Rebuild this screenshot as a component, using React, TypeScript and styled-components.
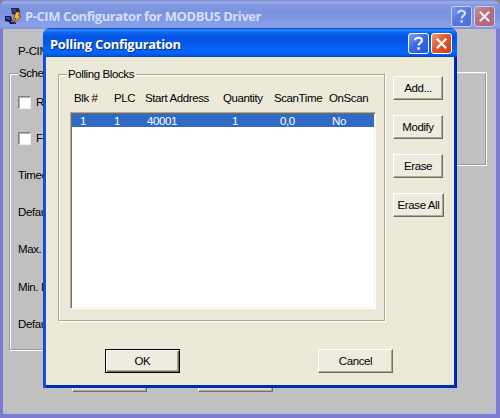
import React from "react";
import styled, { createGlobalStyle, css } from "styled-components";

const GlobalStyle = createGlobalStyle`
  * { box-sizing: border-box; }
  body { margin: 0; background: #85858f; overflow: hidden; }
`;

const Desktop = styled.div`
  position: relative;
  width: 500px;
  height: 418px;
  overflow: hidden;
  font: 11.5px/14px "Liberation Sans", Arial, sans-serif;
  color: #000;
`;

const Text = styled.span<{ $track?: number }>`
  white-space: nowrap;
  letter-spacing: ${(p) => p.$track ?? -0.4}px;
`;

const MainWindow = styled.section`
  display: flex;
  flex-direction: column;
  width: 500px;
  height: 418px;
  border-radius: 7px 7px 0 0;
  overflow: hidden;
  background: #7c7cd0;
`;

const MainTitleBar = styled.header`
  display: flex;
  align-items: center;
  flex: none;
  height: 29px;
  padding: 3px 5px 0 5px;
  background: linear-gradient(#7786c8 0, #9cafeb 2px, #8398e0 5px, #7b92df 12px, #8299e4 20px, #8ba2ec 26px, #8192dc 29px);
`;

const Title = styled.h1<{ $muted?: boolean }>`
  flex: 1;
  margin: 0;
  padding-left: ${(p) => (p.$muted ? 3 : 0)}px;
  font: bold 13px/20px "Open Sans", "Noto Sans", sans-serif;
  white-space: nowrap;
  color: ${(p) => (p.$muted ? "#d5dff9" : "#fff")};
  letter-spacing: ${(p) => (p.$muted ? -0.42 : -0.3)}px;
  text-shadow: ${(p) => (p.$muted ? "none" : "1px 1px 1px #0c2c8c")};
`;

const CaptionButtons = styled.div`
  display: flex;
  gap: 2px;
`;

const CaptionButton = styled.button<{ $close?: boolean; $muted?: boolean }>`
  display: grid;
  place-items: center;
  width: 21px;
  height: 21px;
  padding: 0;
  border: 1px solid ${(p) => (p.$muted ? "#c3d0f6" : "#fff")};
  border-radius: 3px;
  background: ${(p) =>
    p.$close
      ? p.$muted
        ? "linear-gradient(135deg, #c18c9e, #b56d7c 50%, #a9697d)"
        : "linear-gradient(135deg, #f09a7c, #e4572e 45%, #cf3d12)"
      : p.$muted
        ? "linear-gradient(135deg, #7c98ec, #5577e0 50%, #4c6bd9)"
        : "linear-gradient(135deg, #7ba1f7, #3b6bea 45%, #2152dc)"};
`;

const MainBody = styled.div`
  flex: 1;
  display: grid;
  grid-template-columns: 1fr 1fr;
  grid-template-rows: 43px 278px 1fr;
  margin: 0 4px 4px 3px;
  padding-left: 6px;
  background: #c0c0c0;
  box-shadow: inset -2px 0 #b9bdd4, inset 0 -2px #babbd0;
`;

const MainHeading = styled.div`
  grid-column: 1 / 3;
  padding: 15px 0 0 9px;
`;

const groupFrame = css`
  margin: 0;
  min-width: 0;
  border: 1px solid #808080;
  box-shadow: 1px 1px #fff, inset 1px 1px #fff;
`;

const ScheduleGroup = styled.fieldset`
  ${groupFrame}
  padding: 0 0 0 8px;
  margin-top: -6px;
  height: 284px;
  border-color: #9c9c9c;
`;

const Legend = styled.legend<{ $bg: string }>`
  padding: 0 2px 0 1px;
  background: ${(p) => p.$bg};
  line-height: 14px;
`;

const SideGroup = styled.div`
  width: 244px;
  height: 94px;
  margin-left: -10px;
  border: 1px solid #fff;
  box-shadow: inset -1px -1px #999, inset 0 1px #ccc;
`;

const OptionRow = styled.label`
  display: flex;
  align-items: center;
  gap: 5px;
  height: 36px;
`;

const Options = styled.div`
  padding-top: 4px;
`;

const CheckBox = styled.span`
  width: 13px;
  height: 13px;
  background: #fff;
  border: 1px solid;
  border-color: #808080 #eee #eee #808080;
  box-shadow: inset 1px 1px #b0b0b0;
`;

const FieldRow = styled.div`
  display: flex;
  align-items: center;
  height: 37.4px;
`;

const MainActions = styled.footer`
  grid-column: 1 / 3;
  display: flex;
  gap: 51px;
  padding: 18px 0 0 63px;
`;

const bevel = css`
  border: 1px solid;
  border-color: #fff #716f64 #716f64 #fff;
  box-shadow: inset -1px -1px #aca899;
`;

const PushButton = styled.button<{ $w: number; $default?: boolean; $gray?: boolean }>`
  ${bevel}
  display: flex;
  align-items: center;
  justify-content: center;
  flex: none;
  width: ${(p) => p.$w}px;
  height: 24px;
  padding: 0 0 1px;
  font: inherit;
  color: #000;
  background: ${(p) => (p.$gray ? "#dcdcdc" : "#eeecdf")};
  ${(p) =>
    p.$default &&
    css`
      border-color: #000;
      box-shadow: inset 1px 1px #fff, inset -1px -1px #716f64, inset -2px -2px #aca899;
    `}
`;

const Dialog = styled.section`
  position: absolute;
  left: 43px;
  top: 28px;
  display: flex;
  flex-direction: column;
  width: 414px;
  height: 360px;
  border-radius: 7px 7px 0 0;
  overflow: hidden;
  background: linear-gradient(90deg, #1642c8 0, #0a5cf0 3px, #0034c8 411px, #001a98 414px);
`;

const DialogTitleBar = styled.header`
  display: flex;
  align-items: center;
  flex: none;
  height: 29px;
  padding: 2px 5px 0 7px;
  background: linear-gradient(#0a3fc0 0, #2e8cff 2px, #0f6cf0 4px, #0455e2 8px, #0557e6 14px, #0464fb 21px, #0465fc 25px, #0348d6 29px);
`;

const DialogBody = styled.div`
  flex: 1;
  display: grid;
  grid-template: 274px 1fr / 338px 1fr;
  margin: 0 3px;
  background: #ece9d8;
  border-bottom: 3px solid #0029b4;
`;

const PollingGroup = styled.fieldset`
  ${groupFrame}
  width: 327px;
  height: 254px;
  margin: 10px 0 0 12px;
  padding: 0 7px 0 8px;
  border-color: #aca899;
`;

const HeaderRow = styled.div`
  display: grid;
  grid-template-columns: 40px 31px 78px 51px 55px 1fr;
  padding: 10px 0 0 7px;
  height: 31px;
`;

const ListBox = styled.div`
  width: 306px;
  height: 197px;
  margin-left: 3px;
  background: #fff;
  border: 1px solid;
  border-color: #aca899 #fff #fff #aca899;
  box-shadow: inset 1px 1px #716f64, inset -1px -1px #f3f1e6;
  padding: 1px;
`;

const ListRow = styled.div`
  display: grid;
  grid-template-columns: 34px 33px 85px 48px 52px 1fr;
  height: 13px;
  line-height: 14px;
  padding: 0 0 0 8px;
  color: #fff;
  background: #316ac5;
`;

const ActionColumn = styled.div`
  display: flex;
  flex-direction: column;
  gap: 15px;
  padding: 19px 0 0 9px;
`;

const DialogActions = styled.footer`
  grid-column: 1 / 3;
  display: flex;
  gap: 138px;
  padding: 18px 0 0 59px;
`;

const HelpGlyph = ({ muted }: { muted?: boolean }) => (
  <svg width="19" height="19" viewBox="0 0 19 19" fill="none" stroke={muted ? "#d7e1fb" : "#fff"} strokeWidth="2.1">
    <path d="M6 6.2C6.2 3 13 2.7 13 6.3C13 8.8 9.7 8.5 9.6 11.5" />
    <path d="M8.4 14.5H10.8" strokeWidth="2.4" />
  </svg>
);

const CloseGlyph = ({ muted }: { muted?: boolean }) => (
  <svg width="19" height="19" viewBox="0 0 19 19" fill="none" stroke={muted ? "#f0e6ee" : "#fff"} strokeWidth="2.3">
    <path d="M4.8 4.8L14.2 14.2M14.2 4.8L4.8 14.2" />
  </svg>
);

const AppIcon = () => (
  <svg width="17" height="17" viewBox="0 0 17 17">
    <path d="M6 0H14L15 4L12 7L7 6Z" fill="#24243a" />
    <path d="M7 1H11V4H8Z" fill="#2340b8" />
    <path d="M0 8H6L7 12L11 14V16H5L4 14L0 13Z" fill="#15193c" />
    <path d="M1 9H5V12L1 11Z" fill="#1d46dc" />
    <path d="M6 13H9V14H6Z" fill="#8d93a8" />
    <path d="M11 4H15L13.5 8H16L9 16L11 10.5H8.5Z" fill="#fbb924" stroke="#7c3518" strokeWidth=".8" />
  </svg>
);

const WindowControls = ({ muted }: { muted?: boolean }) => (
  <CaptionButtons>
    <CaptionButton $muted={muted} aria-label="Help"><HelpGlyph muted={muted} /></CaptionButton>
    <CaptionButton $muted={muted} $close aria-label="Close"><CloseGlyph muted={muted} /></CaptionButton>
  </CaptionButtons>
);

const columns = ["Blk #", "PLC", "Start Address", "Quantity", "ScanTime", "OnScan"];
const block = ["1", "1", "40001", "1", "0,0", "No"];
const fields = ["Timeout", "Default", "Max. ", "Min. D", "Default"];
const actions = [
  { label: "Add...", width: 50 },
  { label: "Modify", width: 50 },
  { label: "Erase", width: 50 },
  { label: "Erase All", width: 51 },
];

export default function App() {
  return (
    <>
      <GlobalStyle />
      <Desktop>
        <MainWindow>
          <MainTitleBar>
            <AppIcon />
            <Title $muted>P-CIM Configurator for MODBUS Driver</Title>
            <WindowControls muted />
          </MainTitleBar>
          <MainBody>
            <MainHeading><Text>P-CIM</Text></MainHeading>
            <ScheduleGroup>
              <Legend $bg="#c0c0c0"><Text>Sche</Text></Legend>
              <Options>
                <OptionRow><CheckBox /><Text>R</Text></OptionRow>
                <OptionRow><CheckBox /><Text>F</Text></OptionRow>
              </Options>
              {fields.map((f, i) => (
                <FieldRow key={i}><Text>{f}</Text></FieldRow>
              ))}
            </ScheduleGroup>
            <SideGroup />
            <MainActions>
              <PushButton $w={75} $gray />
              <PushButton $w={75} $gray />
            </MainActions>
          </MainBody>
        </MainWindow>

        <Dialog>
          <DialogTitleBar>
            <Title>Polling Configuration</Title>
            <WindowControls />
          </DialogTitleBar>
          <DialogBody>
            <PollingGroup>
              <Legend $bg="#ece9d8"><Text>Polling Blocks</Text></Legend>
              <HeaderRow>
                {columns.map((c) => <Text key={c}>{c}</Text>)}
              </HeaderRow>
              <ListBox>
                <ListRow>
                  {block.map((v, i) => <Text key={i}>{v}</Text>)}
                </ListRow>
              </ListBox>
            </PollingGroup>
            <ActionColumn>
              {actions.map((a) => (
                <PushButton key={a.label} $w={a.width}><Text>{a.label}</Text></PushButton>
              ))}
            </ActionColumn>
            <DialogActions>
              <PushButton $w={75} $default><Text>OK</Text></PushButton>
              <PushButton $w={75}><Text>Cancel</Text></PushButton>
            </DialogActions>
          </DialogBody>
        </Dialog>
      </Desktop>
    </>
  );
}
